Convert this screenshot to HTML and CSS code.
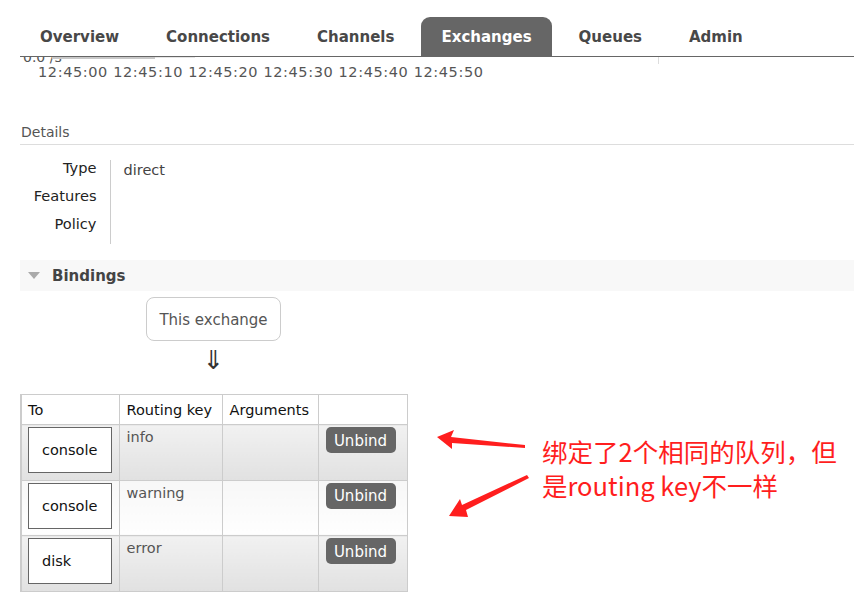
FILE: index.html
```html
<!DOCTYPE html>
<html lang="zh-CN">
<head>
<meta charset="utf-8">
<title>Exchanges</title>
<link rel="stylesheet" href="styles.css">
</head>
<body>
<header class="tabs">
  <ul class="tab-list">
    <li class="tab">Overview</li>
    <li class="tab">Connections</li>
    <li class="tab">Channels</li>
    <li class="tab active">Exchanges</li>
    <li class="tab">Queues</li>
    <li class="tab">Admin</li>
  </ul>
</header>
<main class="page">
  <div class="chart-stub">
    <span class="rate">0.0 /s</span>
    <span class="bar-dark"></span>
    <span class="bar-light"></span>
    <span class="tick"></span>
  </div>
  <div class="time-axis">12:45:00 12:45:10 12:45:20 12:45:30 12:45:40 12:45:50</div>

  <h2 class="section-title">Details</h2>
  <table class="facts">
    <tr><th>Type</th><td class="val">direct</td></tr>
    <tr><th>Features</th><td></td></tr>
    <tr><th>Policy</th><td></td></tr>
  </table>

  <div class="section-head">
    <span class="tri"></span>
    <span class="section-name">Bindings</span>
  </div>

  <div class="flow">
    <div class="this-exchange">This exchange</div>
    <div class="down-arrow">⇓</div>
  </div>

  <table class="bindings">
    <thead>
      <tr><th class="c-to">To</th><th class="c-key">Routing key</th><th class="c-args">Arguments</th><th class="c-act"></th></tr>
    </thead>
    <tbody>
      <tr class="odd">
        <td class="c-to"><span class="dest">console</span></td>
        <td class="c-key">info</td>
        <td class="c-args"></td>
        <td class="c-act"><span class="btn">Unbind</span></td>
      </tr>
      <tr class="even">
        <td class="c-to"><span class="dest">console</span></td>
        <td class="c-key">warning</td>
        <td class="c-args"></td>
        <td class="c-act"><span class="btn">Unbind</span></td>
      </tr>
      <tr class="odd">
        <td class="c-to"><span class="dest">disk</span></td>
        <td class="c-key">error</td>
        <td class="c-args"></td>
        <td class="c-act"><span class="btn">Unbind</span></td>
      </tr>
    </tbody>
  </table>
</main>

<svg class="arrows" width="110" height="100" viewBox="430 425 110 100">
  <polygon points="437,437 454,430 451,437 525,445 525,448 452,443 452,449" fill="#ff1e1e"/>
  <polygon points="449,516 460,499 462,505 527,475 529,478 466,510 468,517" fill="#ff1e1e"/>
</svg>
<div class="note">绑定了2个相同的队列，但<br>是routing key不一样</div>
</body>
</html>
```
FILE: styles.css
```css
* { box-sizing: border-box; }
html, body { margin: 0; padding: 0; background: #fff; }
body {
  font-family: "DejaVu Sans", Verdana, sans-serif;
  font-size: 14px;
  color: #555;
  width: 854px;
  height: 615px;
  overflow: hidden;
  position: relative;
}

.tabs { padding-left: 20px; }
.tab-list {
  list-style: none;
  margin: 0;
  padding: 17px 0 0 0;
  display: flex;
  gap: 7px;
  border-bottom: 1px solid #666;
  height: 57px;
}
.tab {
  padding: 1px 20px 0;
  height: 39px;
  line-height: 38px;
  font-weight: bold;
  font-size: 15px;
  color: #484848;
  border-radius: 9px 9px 0 0;
}
.tab.active { background: #666; color: #fff; }

.page { padding-left: 20px; }

.chart-stub {
  height: 7px;
  overflow: hidden;
  position: relative;
  display: flex;
  align-items: flex-start;
}
.rate {
  font-size: 14px;
  line-height: 16px;
  margin-top: -8px;
  margin-left: 3px;
  color: #555;
  width: 29px;
  white-space: nowrap;
}
.bar-dark { width: 103px; height: 2px; background: #c8c8c8; }
.bar-light { width: 40px; height: 1px; background: #e6e6e6; }
.tick { position: absolute; left: 638px; top: 0; width: 1px; height: 7px; background: #ddd; }

.time-axis {
  margin: -1px 0 0 18px;
  font-size: 14.5px;
  letter-spacing: 0.6px;
  line-height: 18px;
  color: #555;
  white-space: nowrap;
  height: 18px;
}

.section-title {
  margin: 41px 0 0 0;
  font-size: 14px;
  font-weight: normal;
  line-height: 20px;
  padding: 0 0 2px 1px;
  color: #555;
  border-bottom: 1px solid #ddd;
}

.facts {
  border-collapse: collapse;
  margin-top: 15px;
}
.facts th {
  width: 90px;
  text-align: right;
  font-weight: normal;
  font-size: 14.6px;
  color: #222;
  padding: 0 13px 12px 0;
  line-height: 16px;
  vertical-align: top;
}
.facts td {
  border-left: 1px solid #ccc;
  padding: 2px 0 10px 13px;
  line-height: 16px;
  vertical-align: top;
  color: #444;
  font-size: 14.5px;
}

.section-head {
  margin-top: 16px;
  height: 31px;
  background: #f8f8f8;
  display: flex;
  align-items: center;
  padding-left: 8px;
}
.tri {
  width: 0; height: 0;
  border-left: 6px solid transparent;
  border-right: 6px solid transparent;
  border-top: 7px solid #aaa;
  margin-right: 12px;
}
.section-name { font-weight: bold; font-size: 15px; color: #444; }

.flow {
  display: flex;
  flex-direction: column;
  align-items: flex-start;
  padding-left: 126px;
  margin-top: 6px;
}
.this-exchange {
  width: 135px;
  height: 44px;
  border: 1px solid #ccc;
  border-radius: 8px;
  display: flex;
  align-items: center;
  justify-content: center;
  color: #555;
  font-size: 15px;
  padding-top: 2px;
}
.down-arrow {
  width: 135px;
  text-align: center;
  font-size: 26px;
  line-height: 36px;
  color: #333;
  margin-top: 1px;
}

.bindings {
  margin-top: 16px;
  border-collapse: collapse;
  border-left: 2px solid #ccc;
  table-layout: fixed;
  width: 386px;
}
.bindings th, .bindings td {
  border: 1px solid #ccc;
  text-align: left;
  vertical-align: top;
}
.bindings th {
  font-weight: normal;
  color: #111;
  height: 30px;
  padding: 0 0 0 6px;
  vertical-align: middle;
  background: #fff;
  font-size: 14.5px;
}
.bindings .c-to { width: 98px; }
.bindings .c-key { width: 103px; }
.bindings .c-args { width: 96px; }
.bindings .c-act { width: 89px; }
.bindings th.c-key, .bindings th.c-args { padding-left: 7px; }

.bindings td { height: 55.5px; padding: 0; }
.bindings tr.odd td { background: linear-gradient(#f1f1f1, #e1e1e1); }
.bindings tr.even td { background: linear-gradient(#f7f7f7, #fefefe); }

.bindings td.c-to { padding: 2px 0 0 6px; }
.dest {
  display: flex;
  align-items: center;
  width: 84px;
  height: 46px;
  background: #fff;
  border: 1px solid #666;
  padding-left: 13px;
  color: #111;
  font-size: 14.5px;
}
.bindings td.c-key {
  padding: 4px 0 0 7px;
  line-height: 17px;
  color: #555;
  font-size: 14.5px;
}
.bindings td.c-act { padding: 2px 0 0 7px; }
.btn {
  display: inline-flex;
  align-items: center;
  justify-content: center;
  width: 70px;
  height: 26px;
  background: #666;
  color: #fff;
  border-radius: 5px;
  font-size: 15px;
  padding-top: 1px;
}

.arrows { position: absolute; left: 430px; top: 425px; }
.note {
  position: absolute;
  left: 542px;
  top: 434px;
  font-family: "Noto Sans CJK SC", "Microsoft YaHei", sans-serif;
  font-size: 25.5px;
  line-height: 34px;
  color: #ff1e1e;
  white-space: nowrap;
}
```
